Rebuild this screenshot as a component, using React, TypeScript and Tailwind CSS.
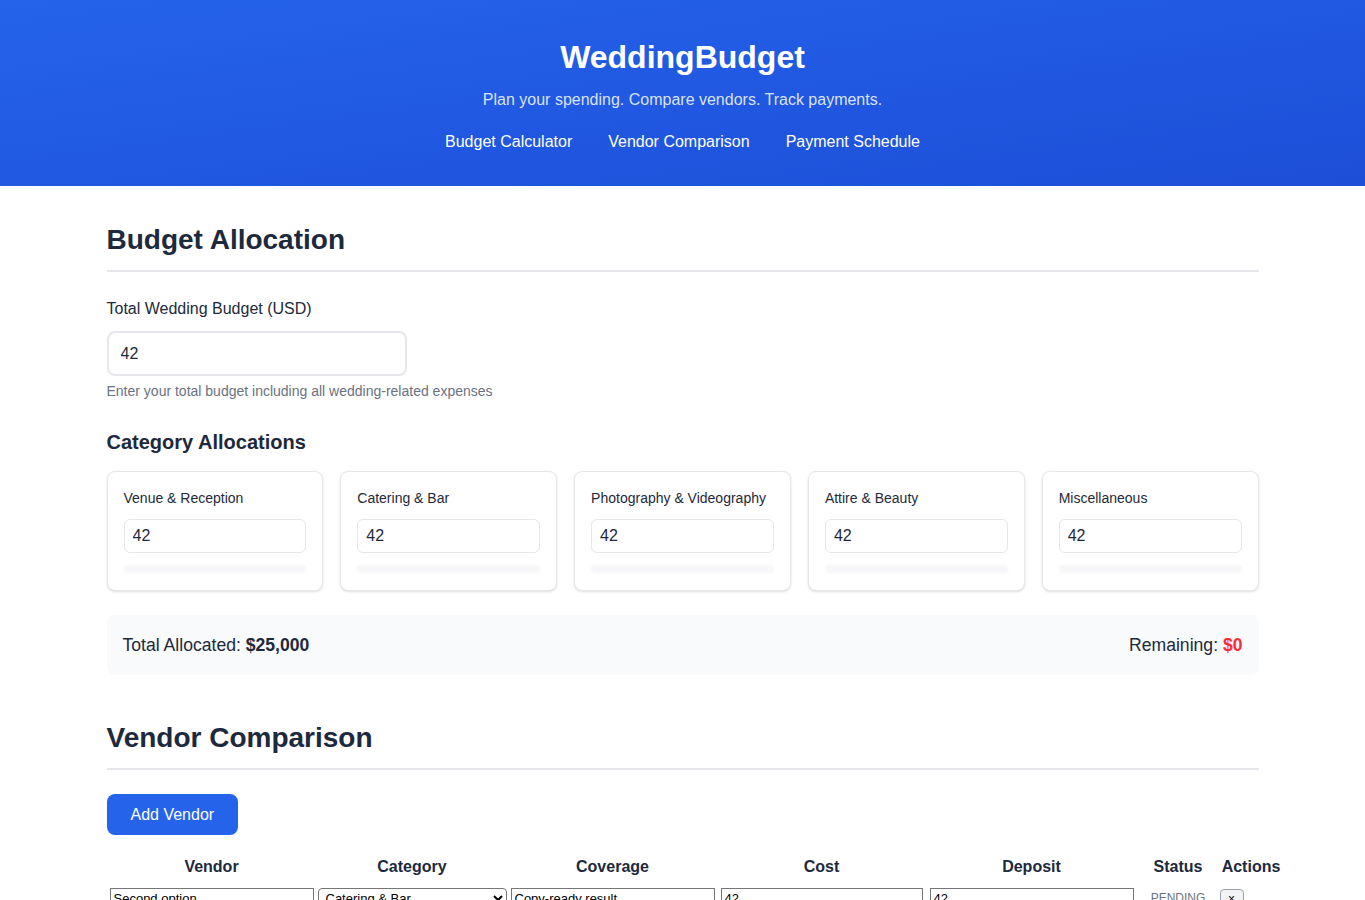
import * as React from "react";

const categories = [
  "Venue & Reception",
  "Catering & Bar",
  "Photography & Videography",
  "Attire & Beauty",
  "Miscellaneous",
];

function Header() {
  return (
    <header className="h-[186px] bg-gradient-to-br from-[#2563eb] to-[#1d4ed8] text-center text-white">
      <h1 className="pt-[38px] text-[32px] font-bold leading-[38px]">WeddingBudget</h1>
      <p className="mt-[12px] text-base leading-6 text-blue-50/90">
        Plan your spending. Compare vendors. Track payments.
      </p>
      <nav className="mt-[18px] flex justify-center gap-9 text-base leading-6">
        <a href="#budget">Budget Calculator</a>
        <a href="#vendors">Vendor Comparison</a>
        <a href="#payments">Payment Schedule</a>
      </nav>
    </header>
  );
}

function SectionTitle({ children }: { children: React.ReactNode }) {
  return (
    <h2 className="border-b-2 border-[#e5e7eb] pb-[13px] text-[28px] font-bold leading-[34px] text-slate-800">
      {children}
    </h2>
  );
}

function CategoryCard({ label }: { label: string }) {
  return (
    <div className="rounded-lg border border-gray-200 bg-white px-4 pt-4 pb-[17px] shadow-sm">
      <div className="text-sm leading-5 text-gray-800">{label}</div>
      <input
        defaultValue="42"
        className="mt-[11px] h-[34px] w-full rounded-md border border-gray-200 px-2 text-base text-gray-800 outline-none"
      />
      <div className="mt-3 h-2 rounded-full bg-gray-100/70 blur-[1px]" />
    </div>
  );
}

function BudgetSection() {
  return (
    <section id="budget" className="pt-[37px]">
      <SectionTitle>Budget Allocation</SectionTitle>
      <label className="mt-[25px] block text-base leading-6 text-gray-800">
        Total Wedding Budget (USD)
      </label>
      <input
        defaultValue="42"
        className="mt-[10px] h-[45px] w-[300px] rounded-lg border-2 border-gray-200 px-3 text-base text-gray-800 outline-none"
      />
      <p className="mt-[5px] text-sm leading-5 text-gray-500">
        Enter your total budget including all wedding-related expenses
      </p>
      <h3 className="mt-[27px] text-xl font-bold leading-7 text-slate-800">Category Allocations</h3>
      <div className="mt-[15px] grid grid-cols-5 gap-[17px]">
        {categories.map((c) => (
          <CategoryCard key={c} label={c} />
        ))}
      </div>
      <div className="mt-6 flex h-[60px] items-center justify-between rounded-lg bg-slate-50 px-4 text-[17.6px] text-gray-800">
        <span>
          Total Allocated: <strong>$25,000</strong>
        </span>
        <span>
          Remaining: <strong className="text-red-500">$0</strong>
        </span>
      </div>
    </section>
  );
}

const inputCls =
  "h-[21px] w-full border border-[#767676] bg-white px-[3px] text-[13px] leading-[17px] text-black";

function VendorSection() {
  return (
    <section id="vendors" className="pt-[46px]">
      <SectionTitle>Vendor Comparison</SectionTitle>
      <button className="mt-6 h-[41px] rounded-lg bg-[#2563eb] px-6 text-base text-white">
        Add Vendor
      </button>
      <table className="mt-[20px] ml-px w-[1175px] table-fixed border-collapse">
        <colgroup>
          <col className="w-[208px]" />
          <col className="w-[193px]" />
          <col className="w-[208px]" />
          <col className="w-[210px]" />
          <col className="w-[210px]" />
          <col className="w-[83px]" />
          <col className="w-[63px]" />
        </colgroup>
        <thead>
          <tr className="text-base font-bold text-slate-800">
            <th className="py-[2px] leading-5">Vendor</th>
            <th className="py-[2px] leading-5">Category</th>
            <th className="py-[2px] leading-5">Coverage</th>
            <th className="py-[2px] leading-5">Cost</th>
            <th className="py-[2px] leading-5">Deposit</th>
            <th className="py-[2px] leading-5">Status</th>
            <th className="py-[2px] leading-5">Actions</th>
          </tr>
        </thead>
        <tbody>
          <tr>
            <td className="px-[2px] pt-[7px]">
              <input className={inputCls} defaultValue="Second option" />
            </td>
            <td className="px-[2px] pt-[7px]">
              <select className={inputCls + " rounded-sm"} defaultValue="Catering & Bar">
                {categories.map((c) => (
                  <option key={c}>{c}</option>
                ))}
              </select>
            </td>
            <td className="px-[2px] pt-[7px]">
              <input className={inputCls} defaultValue="Copy-ready result" />
            </td>
            <td className="px-[4px] pt-[7px]">
              <input className={inputCls} defaultValue="42" />
            </td>
            <td className="px-[3px] pt-[7px]">
              <input className={inputCls} defaultValue="42" />
            </td>
            <td className="pt-[7px] text-center text-xs text-gray-500">PENDING</td>
            <td className="pt-[7px]">
              <button className="h-[21px] w-[24px] rounded-sm border border-gray-400 bg-gray-100 text-xs">
                ×
              </button>
            </td>
          </tr>
        </tbody>
      </table>
    </section>
  );
}

export default function App() {
  return (
    <div className="min-h-screen bg-white font-['Liberation_Sans',Arial,sans-serif]">
      <Header />
      <main className="mx-auto max-w-6xl pb-10">
        <BudgetSection />
        <VendorSection />
      </main>
    </div>
  );
}
